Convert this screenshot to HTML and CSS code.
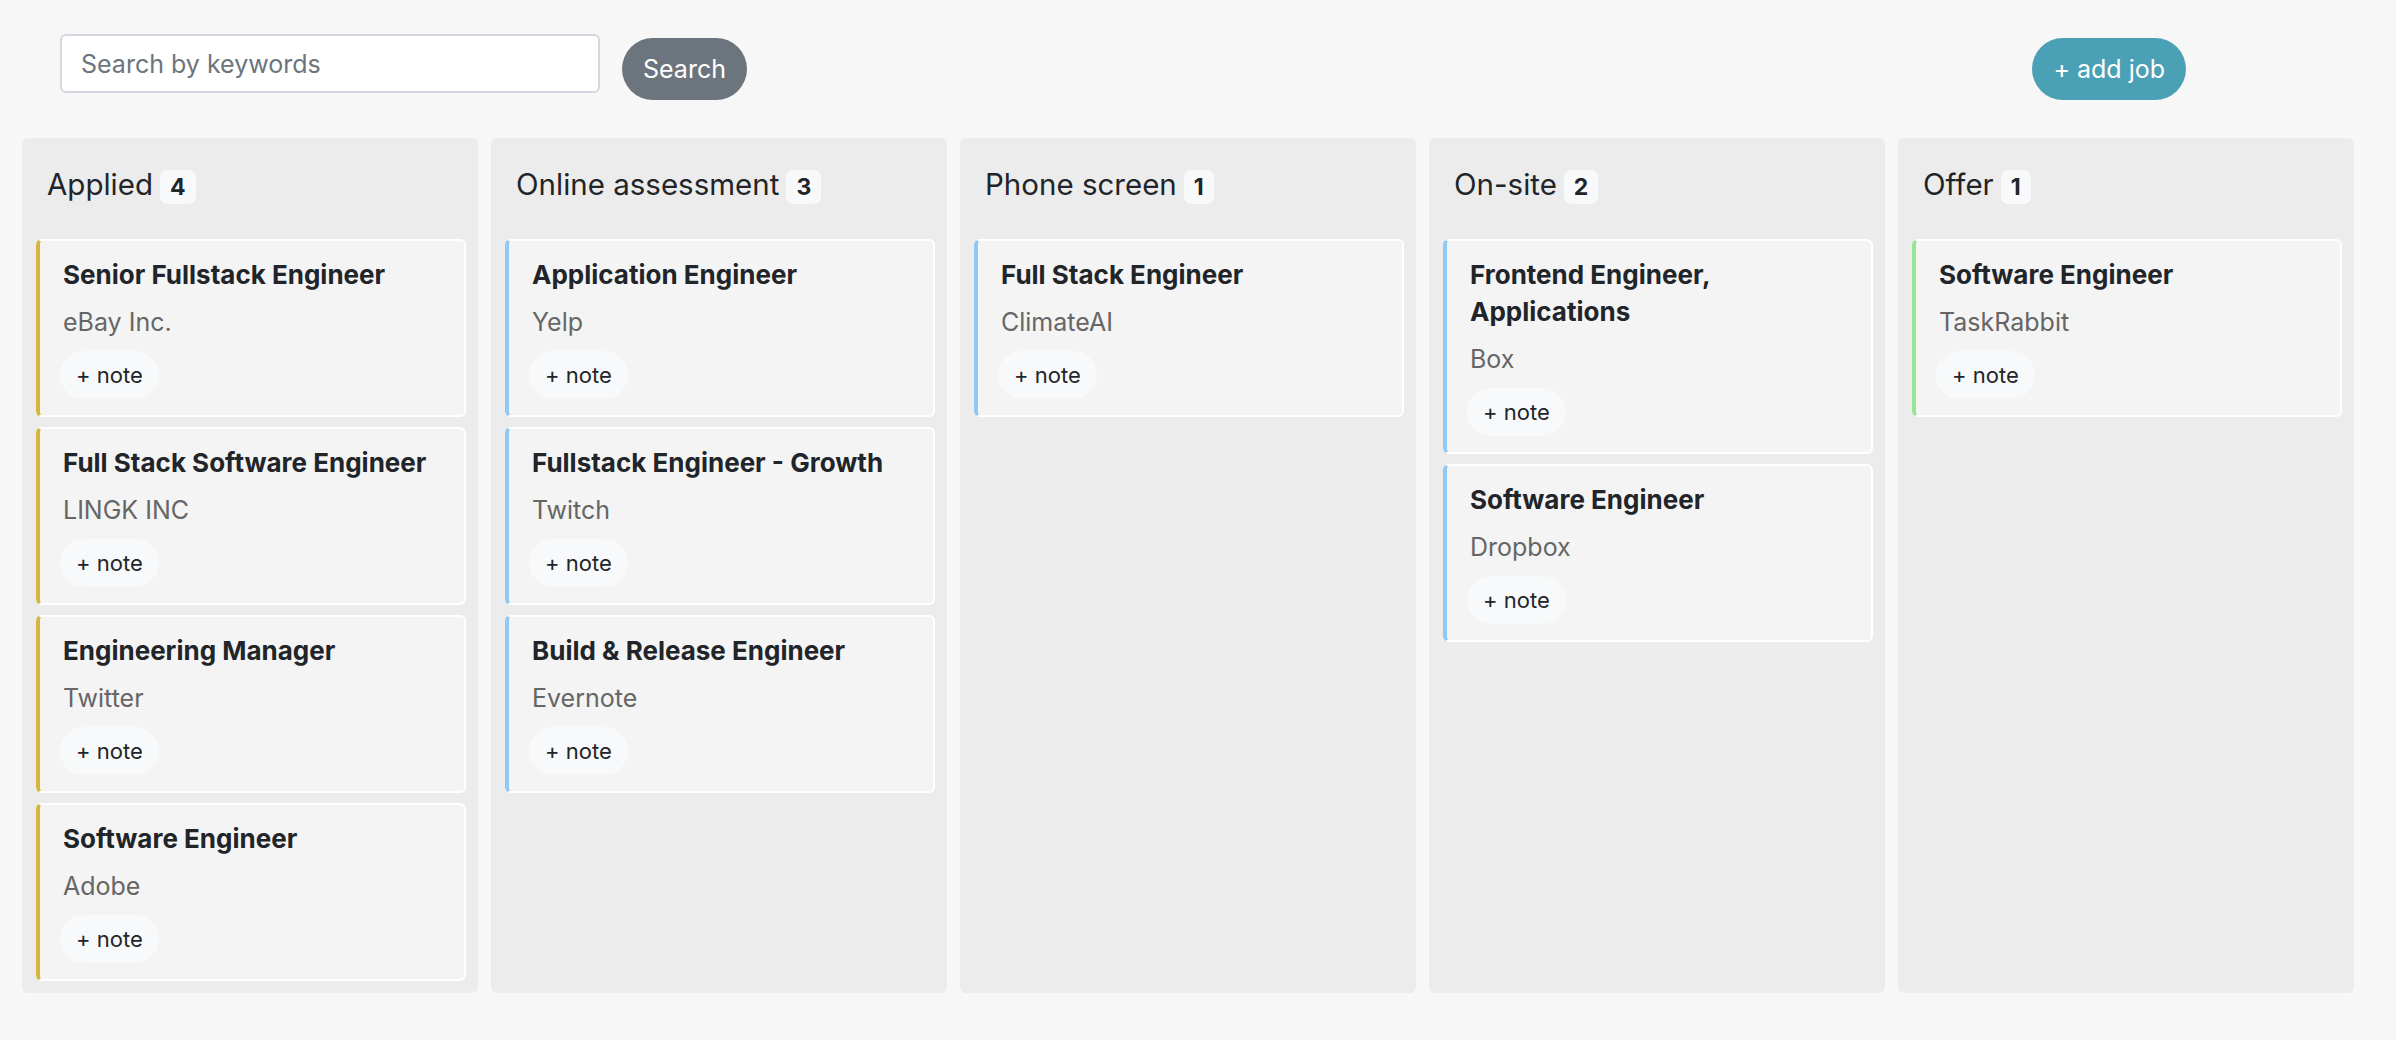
FILE: index.html
```html
<!DOCTYPE html>
<html lang="en">
<head>
  <meta charset="UTF-8">
  <meta name="viewport" content="width=device-width, initial-scale=1.0">
  <title>Job Board</title>
  <link rel="stylesheet" href="styles.css">
</head>
<body>

  <div class="topbar">
    <form class="search" onsubmit="return false">
      <input class="search-input" type="text" placeholder="Search by keywords">
      <button class="btn btn-search" type="submit">Search</button>
    </form>
    <button class="btn btn-add">+ add job</button>
  </div>

  <div class="board">

    <div class="column applied">
      <div class="column-head">
        <span class="column-name">Applied</span>
        <span class="count">4</span>
      </div>
      <div class="cards">
        <div class="card">
          <div class="card-title">Senior Fullstack Engineer</div>
          <div class="card-company">eBay Inc.</div>
          <button class="note-btn">+ note</button>
        </div>
        <div class="card">
          <div class="card-title">Full Stack Software Engineer</div>
          <div class="card-company">LINGK INC</div>
          <button class="note-btn">+ note</button>
        </div>
        <div class="card">
          <div class="card-title">Engineering Manager</div>
          <div class="card-company">Twitter</div>
          <button class="note-btn">+ note</button>
        </div>
        <div class="card">
          <div class="card-title">Software Engineer</div>
          <div class="card-company">Adobe</div>
          <button class="note-btn">+ note</button>
        </div>
      </div>
    </div>

    <div class="column assessment">
      <div class="column-head">
        <span class="column-name">Online assessment</span>
        <span class="count">3</span>
      </div>
      <div class="cards">
        <div class="card">
          <div class="card-title">Application Engineer</div>
          <div class="card-company">Yelp</div>
          <button class="note-btn">+ note</button>
        </div>
        <div class="card">
          <div class="card-title">Fullstack Engineer - Growth</div>
          <div class="card-company">Twitch</div>
          <button class="note-btn">+ note</button>
        </div>
        <div class="card">
          <div class="card-title">Build &amp; Release Engineer</div>
          <div class="card-company">Evernote</div>
          <button class="note-btn">+ note</button>
        </div>
      </div>
    </div>

    <div class="column phone">
      <div class="column-head">
        <span class="column-name">Phone screen</span>
        <span class="count">1</span>
      </div>
      <div class="cards">
        <div class="card">
          <div class="card-title">Full Stack Engineer</div>
          <div class="card-company">ClimateAI</div>
          <button class="note-btn">+ note</button>
        </div>
      </div>
    </div>

    <div class="column onsite">
      <div class="column-head">
        <span class="column-name">On-site</span>
        <span class="count">2</span>
      </div>
      <div class="cards">
        <div class="card">
          <div class="card-title">Frontend Engineer, Applications</div>
          <div class="card-company">Box</div>
          <button class="note-btn">+ note</button>
        </div>
        <div class="card">
          <div class="card-title">Software Engineer</div>
          <div class="card-company">Dropbox</div>
          <button class="note-btn">+ note</button>
        </div>
      </div>
    </div>

    <div class="column offer">
      <div class="column-head">
        <span class="column-name">Offer</span>
        <span class="count">1</span>
      </div>
      <div class="cards">
        <div class="card">
          <div class="card-title">Software Engineer</div>
          <div class="card-company">TaskRabbit</div>
          <button class="note-btn">+ note</button>
        </div>
      </div>
    </div>

  </div>

</body>
</html>
```

FILE: styles.css
```css
body {
  margin: 0;
  background-color: #f7f7f7;
  font-family: Inter, "Noto Sans", sans-serif;
  color: #212529;
}

.topbar {
  display: flex;
  justify-content: space-between;
  align-items: flex-start;
  padding: 34px 210px 0 60px;
}

.search {
  display: flex;
  align-items: flex-start;
  gap: 22px;
  margin: 0;
}

.search-input {
  width: 540px;
  height: 59px;
  box-sizing: border-box;
  border: 2px solid #d3d8de;
  border-radius: 6px;
  padding: 0 19px;
  font-family: inherit;
  font-size: 25px;
  color: #212529;
  background-color: #fff;
  outline: none;
}

.search-input::placeholder {
  color: #6c757d;
}

.btn {
  margin-top: 4px;
  height: 62px;
  border: none;
  border-radius: 31px;
  padding: 0 21px;
  font-family: inherit;
  font-size: 25px;
  color: #fff;
  cursor: pointer;
}

.btn-search {
  background-color: #6c757d;
}

.btn-add {
  background-color: #4aa1b5;
}

.board {
  display: flex;
  gap: 13px;
  padding-left: 22px;
  margin-top: 38px;
}

.column {
  width: 456px;
  box-sizing: border-box;
  background-color: #ececec;
  border-radius: 6px;
  padding: 0 12px 12px 14px;
}

.column-head {
  display: flex;
  align-items: baseline;
  gap: 7px;
  padding: 28px 0 0 11px;
  margin-bottom: 35px;
}

.column-name {
  font-size: 29.5px;
  line-height: 36px;
}

.count {
  font-size: 23px;
  font-weight: 700;
  line-height: 22px;
  padding: 6px 10px;
  border-radius: 7px;
  background-color: #f8f9fa;
}

.cards {
  display: flex;
  flex-direction: column;
  gap: 10px;
}

.card {
  background-color: #f4f4f4;
  border: 2px solid #fff;
  border-left: 4px solid #d9b53f;
  border-radius: 6px;
  padding: 15px 12px 16px 23px;
}

.assessment .card,
.phone .card,
.onsite .card {
  border-left-color: #90c8f4;
}

.offer .card {
  border-left-color: #98e394;
}

.card-title {
  font-size: 26px;
  font-weight: 700;
  line-height: 37px;
}

.card-company {
  font-size: 25px;
  line-height: 36px;
  color: #666;
  margin: 11px 0;
}

.note-btn {
  display: block;
  height: 48px;
  margin-left: -3px;
  padding: 0 16px;
  border: none;
  border-radius: 24px;
  background-color: #f8f9fa;
  font-family: inherit;
  font-size: 22px;
  color: #212529;
  cursor: pointer;
}
```
